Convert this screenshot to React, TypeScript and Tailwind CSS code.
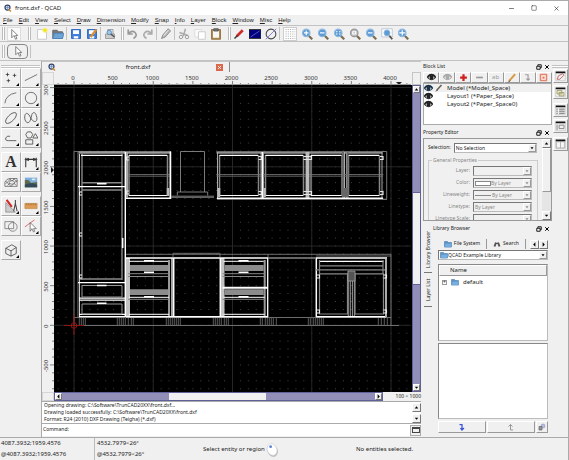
import type { ReactNode } from "react";
import { Minus, Square, X } from "lucide-react";

const menus = ["File", "Edit", "View", "Select", "Draw", "Dimension", "Modify", "Snap", "Info", "Layer", "Block", "Window", "Misc", "Help"];

function Icon({ children, className = "w-3 h-3" }: { children: ReactNode; className?: string }) {
  return (
    <svg viewBox="0 0 16 16" className={`${className} shrink-0`} fill="none" stroke="#555" strokeWidth="1.2">
      {children}
    </svg>
  );
}

const Handle = () => <div className="w-[3px] h-[13px] shrink-0 border-x border-[#bcbcbc] bg-white" />;
const Sep = () => <div className="mr-px w-px h-[13px] shrink-0 bg-[#c2c2c2]" />;

const Cursor = () => (
  <Icon>
    <path d="M5 2v11l3-3 2 5 2-1-2-4h3z" fill="#fff" stroke="#777" />
  </Icon>
);

const Logo = () => (
  <Icon className="w-2 h-2">
    <circle cx="7" cy="7" r="5" fill="#dce6f5" stroke="#33446b" strokeWidth="2.5" />
    <path d="M9 10l5 5" stroke="#c98e35" strokeWidth="3" />
    <path d="M4 7h6M7 4v6" stroke="#5b7db8" />
  </Icon>
);

const Folder = ({ className = "w-2 h-2" }: { className?: string }) => (
  <Icon className={className}>
    <path d="M1 3h6l1 2h7v9H1z" fill="#5b91c4" stroke="#447aae" />
    <path d="M3 7h13l-2 7H1z" fill="#79afe0" stroke="#5b91c4" strokeWidth=".6" />
  </Icon>
);

const Eye = ({ color = "#222" }: { color?: string }) => (
  <Icon className="w-[9px] h-[9px]">
    <path d="M1 8q7-8 14 0q-7 8-14 0z" fill="#fff" stroke={color} strokeWidth="2" />
    <circle cx="8" cy="8" r="3.4" fill={color} stroke="none" />
    <path d="M1 7q7-8 14 0" stroke={color} strokeWidth="3" />
  </Icon>
);

const Pencil = ({ color = "#d99a45", className = "w-[10px] h-[10px]" }: { color?: string; className?: string }) => (
  <Icon className={className}>
    <path d="M3 13L13 2" stroke={color} strokeWidth="3" />
    <path d="M2 15l3-3" stroke="#333" strokeWidth="1.5" />
  </Icon>
);

function Zoom({ mark, gray }: { mark: ReactNode; gray?: boolean }) {
  return (
    <Icon>
      <path d="M10 10l5 5" stroke="#796e51" strokeWidth="3" />
      <circle cx="7" cy="6.5" r="5" fill={gray ? "#bcbcbc" : "#5c9bd5"} stroke={gray ? "#999" : "#91b9dd"} strokeWidth="1.6" />
      <g stroke="#fff" strokeWidth="1.6">{mark}</g>
    </Icon>
  );
}

type Tool = { name: string; icon: ReactNode };

const fileTools: (Tool | null)[] = [
  { name: "New", icon: <Icon><path d="M2 2h9l3 3v10H2z" fill="#fff" stroke="#c5c5c5" /><circle cx="12" cy="3" r="3" fill="#f3e626" stroke="#f8f08a" /></Icon> },
  { name: "Open", icon: <Icon><path d="M1 3h6l1 2h6v9H1z" fill="#777" stroke="#666" /><path d="M3 7h13l-2 7H1z" fill="#6ba4d5" stroke="#4d87bd" /></Icon> },
  null,
  { name: "Save", icon: <Icon><path d="M2 2h12v12H2z" fill="#3e80dc" stroke="#2d67ba" /><path d="M4 3h8v5H4zM5 11h6v3H5z" fill="#fff" stroke="none" /></Icon> },
  { name: "Save As", icon: <Icon><path d="M2 2h12v12H2z" fill="#3e80dc" stroke="#2d67ba" /><path d="M4 3h8v5H4zM5 11h6v3H5z" fill="#fff" stroke="none" /><path d="M6 12l8-10" stroke="#dc8c32" strokeWidth="3" /></Icon> },
  null,
  { name: "Print Preview", icon: <Icon><path d="M2 8h12v6H2z" fill="#ccc" stroke="#999" /><path d="M5 2h7v6H5z" fill="#e8eef5" stroke="#999" /><circle cx="7" cy="6" r="3" fill="#9dc5e8" stroke="#5c8db8" /><path d="M9 8l5 4" strokeWidth="2" /></Icon> },
];

const editTools: (Tool | null)[] = [
  { name: "Undo", icon: <Icon><path d="M3 2v6h6M3 8q5-6 9-2t-2 8" stroke="#999" strokeWidth="2.3" /></Icon> },
  { name: "Redo", icon: <Icon><path d="M13 2v6H7M13 8Q8 2 4 6t2 8" stroke="#aaa" strokeWidth="2.3" /></Icon> },
  null,
  { name: "Erase", icon: <Icon><path d="M2 14l2-5 7-8 3 3-7 8z" fill="#bbb" stroke="#888" /><path d="M5 10l6-7" stroke="#eee" /></Icon> },
  null,
  { name: "Cut", icon: <Icon><path d="M10 1L7 11M2 6l11 4" stroke="#aaa" strokeWidth="2" /><circle cx="4" cy="12" r="2.3" stroke="#999" /><circle cx="12" cy="12" r="2.3" stroke="#999" /></Icon> },
  { name: "Copy", icon: <Icon><path d="M1 2h9v10H1z" fill="#fafafa" stroke="#ddd" /><path d="M6 5h9v10H6z" fill="#fff" stroke="#c8c8c8" /></Icon> },
  { name: "Paste", icon: <Icon><path d="M2 2h12v13H2z" fill="#b58a4c" stroke="#91703d" /><path d="M4 4h8v9H4z" fill="#f8f8f8" stroke="none" /><path d="M5 1h6v3H5z" fill="#777" /></Icon> },
];

const viewTools: Tool[] = [
  { name: "Draft Mode", icon: <Icon><path d="M5 11l8-8" stroke="#cf2929" strokeWidth="3.6" /><path d="M2 14l4-4" stroke="#333" strokeWidth="2" /></Icon> },
  { name: "Antialiasing", icon: <Icon><path d="M0 2h16v12H0z" fill="#00007d" stroke="#333" /><path d="M2 12L14 4" stroke="#5d5dc8" /></Icon> },
  { name: "Linetypes", icon: <Icon><circle cx="8" cy="8" r="6.5" stroke="#444" strokeWidth="1.4" /><path d="M1 15L15 1" stroke="#7474da" /></Icon> },
];

const zoomTools: Tool[] = [
  { name: "Zoom In", icon: <Zoom mark={<path d="M4 6.5h6M7 3.5v6" />} /> },
  { name: "Zoom Out", icon: <Zoom mark={<path d="M4 6.5h6" />} /> },
  { name: "Auto Zoom", icon: <Zoom mark={<path d="M4 5h2M8 5h2M4 8h2M8 8h2" />} /> },
  { name: "Zoom Selection", icon: <Zoom gray mark={<path d="M5 5h4v3H5z" />} /> },
  { name: "Previous View", icon: <Zoom mark={<path d="M4 6.5h6" />} /> },
  { name: "Window Zoom", icon: <Icon><path d="M1 1h14v11H1z" fill="#fff" stroke="#b9c5d0" /><path d="M11 10l4 5" strokeWidth="2.5" /><circle cx="8" cy="6.5" r="4" fill="#5c9bd5" stroke="#91b9dd" /></Icon> },
  { name: "Pan Zoom", icon: <Zoom mark={<path d="M3 6.5h8M7 3v7" />} /> },
];

function ToolRow({ tools }: { tools: (Tool | null)[] }) {
  return (
    <>
      {tools.map((t, i) =>
        t ? (
          <button key={i} aria-label={t.name} className="shrink-0 px-[2px]">{t.icon}</button>
        ) : (
          <Sep key={i} />
        )
      )}
    </>
  );
}

const drawTools: (Tool & { flyout?: boolean })[][] = [
  [
    { name: "Point", flyout: true, icon: <path d="M2 4h4M4 2v4M10 5h4M12 3v4M3 11h4M5 9v4" stroke="#222" strokeWidth=".8" /> },
    { name: "Line", flyout: true, icon: <path d="M1 11L15 4" stroke="#444" strokeWidth=".8" /> },
    { name: "Arc", flyout: true, icon: <path d="M1 14Q2 4 14 2" stroke="#444" strokeWidth=".8" /> },
    { name: "Circle", flyout: true, icon: <circle cx="8" cy="8" r="6.500" stroke="#444" strokeWidth=".8" /> },
    { name: "Ellipse", flyout: true, icon: <ellipse cx="8" cy="8" rx="8" ry="3.600" transform="rotate(-45 8 8)" stroke="#444" strokeWidth=".9" /> },
    { name: "Spline", flyout: true, icon: <path d="M3 13C-1 9 1 1 4 3c3 1 3 6 6 8 4 3 6-1 4-6-1-4-4-4-5-1-1 4-2 11-6 9z" stroke="#444" strokeWidth=".9" /> },
    { name: "Polyline", flyout: true, icon: <path d="M14 11H5Q1 11 2 8t5-2" stroke="#444" strokeWidth=".9" /> },
    { name: "Shape", flyout: true, icon: <g stroke="#444" strokeWidth=".9"><path d="M4 1h4l2 3-2 4H4L2 4zM10 8l3-5 3 5zM2 10h8v5H2z" /></g> },
  ],
  [
    { name: "Text", icon: <text x="8" y="14" textAnchor="middle" fontSize="18" fontFamily="Liberation Serif, serif" fontWeight="700" fill="#333" stroke="none">A</text> },
    { name: "Dimension", flyout: true, icon: <path d="M2 3v11M14 3v11M2 5h12M2 5l3-1v2zM14 5l-3-1v2z" stroke="#333" /> },
    { name: "Hatch", icon: <g stroke="#444" strokeWidth=".7"><path d="M1 8q2-4 6-4h8v9H1z" /><path d="M2 10l6-6M4 12l8-8M8 13l7-7M2 7l6 6M6 4l8 8M11 4l4 4" /><ellipse cx="9" cy="8.500" rx="3" ry="2" fill="#eee" /></g> },
    { name: "Image", icon: <g stroke="none"><path d="M1 3h14v11H1z" fill="#7eaedb" /><path d="M1 6q4-2 7 3l7-1v6H1z" fill="#5e6c49" /><path d="M1 11q7-3 14 0v3H1z" fill="#34495a" /><path d="M9 4h4v2H9z" fill="#dce8f3" /></g> },
  ],
  [
    { name: "Modify", flyout: true, icon: <g><path d="M2 4v11h11z" fill="#ccc" stroke="#777" strokeWidth=".7" /><path d="M3 1l6 8" stroke="#cf2929" strokeWidth="2.400" /><path d="M13 1v4l-2 9M13 5l2 9" stroke="#444" /></g> },
    { name: "Measure", flyout: true, icon: <g><path d="M1 5h14v6H1z" fill="#dc9c56" stroke="#b97c3d" strokeWidth=".6" /><path d="M3 5v2M5 5v2M7 5v2M9 5v2M11 5v2M13 5v2" stroke="#8d5926" strokeWidth=".6" /></g> },
    { name: "Selection", icon: <g stroke="#666" strokeWidth=".8"><path d="M1 3h10v8H1z" /><circle cx="10" cy="9" r="5" /></g> },
    { name: "Snap", flyout: true, icon: <g><path d="M1 9L12 1" stroke="#df4848" strokeWidth=".9" /><path d="M7 4v10l2-3 2 4 1-1-1-3h3z" fill="#fff" strokeWidth=".8" /></g> },
  ],
  [{ name: "Isometric", flyout: true, icon: <path d="M2 6l7-4 5 3v7l-6 3-6-3zM2 6l6 3 6-4M8 9v6" stroke="#444" strokeWidth=".9" /> }],
];

function ToolBox() {
  return (
    <aside className="w-[42px] shrink-0 border-r border-[#aaa] px-px pt-1">
      <div className="h-[3px] border-y border-[#c2c2c2] bg-white" />
      {drawTools.map((group, g) => (
        <div key={g} className="mb-1 grid grid-cols-2">
          {group.map((t) => (
            <button
              key={t.name}
              aria-label={t.name}
              className="relative flex h-5 w-5 items-center justify-center border border-t-white border-l-white border-r-[#aaa] border-b-[#aaa] bg-[#f0f0f0]"
            >
              <Icon className="w-[14px] h-[14px]">{t.icon}</Icon>
              {t.flyout && <span className="absolute right-px bottom-px h-[3px] w-[3px] bg-black [clip-path:polygon(100%_0,100%_100%,0_100%)]" />}
            </button>
          ))}
        </div>
      ))}
    </aside>
  );
}

// model space scale: 1000 units = 79.25px, origin at 20,240 of the canvas
const UNIT = 7.925;
const OX = 20;
const OY = 240.3;

function Ruler() {
  return (
    <svg className="block h-[13px] w-full" fontFamily="Noto Sans, sans-serif" fontSize="6" fill="#333">
      {Array.from({ length: 46 }, (_, i) => i - 2).map((n) => (
        <path key={n} d={`M${OX + n * UNIT} ${n % 5 === 0 ? 9 : 11}V13`} stroke="#555" strokeWidth=".7" />
      ))}
      {[0, 5, 10, 15, 20, 25, 30, 35, 40].map((n) => (
        <text key={n} x={OX + n * UNIT - 1} y="8" textAnchor="middle">{n * 100}</text>
      ))}
      <path d="M342 10h6l-3 3z" fill="#222" />
      <path d="M0 12.500H357" stroke="#999" />
    </svg>
  );
}

function VerticalRuler() {
  return (
    <svg className="block h-full w-3 shrink-0" fontFamily="Noto Sans, sans-serif" fontSize="6" fill="#333">
      {Array.from({ length: 40 }, (_, i) => i - 8).map((n) => (
        <path key={n} d={`M${n % 5 === 0 ? 8 : 10} ${OY - n * UNIT}H12`} stroke="#555" strokeWidth=".7" />
      ))}
      {[-5, 0, 5, 10, 15, 20, 25, 30].map((n) => (
        <text key={n} transform={`translate(6 ${OY - n * UNIT + 1}) rotate(-90)`} textAnchor="middle">{n * 100}</text>
      ))}
      <path d="M9 82v6l3-3z" fill="#222" />
    </svg>
  );
}

const gridRows = Array.from({ length: 39 }, (_, i) => OY - (i - 8) * UNIT);
const legs = [79, 81, 83, 85, 117, 119, 121, 123, 125, 128, 131, 133, 166, 168, 170, 172, 174, 176, 178, 180, 213, 215, 217, 219, 221, 224, 226, 228, 260, 262, 265, 267, 269, 271, 273, 276, 308, 310, 313, 315, 317, 319, 321, 323, 378, 381, 384, 387];

function DrawerUnit({ x, w, thick }: { x: number; w: number; thick?: boolean }) {
  const r = x + w;
  return (
    <g>
      <path d={`M${x} 258h4v59h-4z`} fill="#c4c4c4" />
      <path d={`M${r - 3} 260v57`} stroke="#999" strokeWidth="2" />
      <path d={`M${x + 4} 265H${r - 4}V271H${x + 4}zM${x + 4} 289.300H${r - 4}V295H${x + 4}z`} fill="#8c8c8c" />
      <path d={`M${x + 2} 273.700H${r - 3}M${x + 2} 276.500H${r - 3}M${x + 2} 299.300H${r - 3}`} stroke="#888" />
      <path d={`M${x + 3} 261.300H${r - 4}M${x + 3} 297.300H${r - 3}M${x + 3} 314.300H${r - 3}`} stroke="#fff" />
      {thick && <path d={`M${x + 2} 287.700H${r}`} stroke="#fff" strokeWidth="2" />}
      <path d={`M${x + 18} 260.700h10M${x + 18} 272.300h10M${x + 18} 296.700h10`} stroke="#fff" strokeWidth="1.500" />
      <path d={`M${r} 258v59`} stroke="#fff" strokeWidth="1.300" />
    </g>
  );
}

function WallUnit({ x, r, shelf = true }: { x: number; r: number; shelf?: boolean }) {
  return (
    <g>
      <path d={`M${x + 1} 152V198M${r - 1} 152V198`} stroke="#aaa" />
      <path d={`M${x + 3} 155V196M${r - 3.500} 155V196`} stroke="#888" strokeWidth="1.500" />
      {shelf && <path d={`M${x} 174.500H${r}M${x} 176.200H${r}`} stroke="#777" strokeWidth=".8" />}
      <path d={`M${x + 3} 155.400H${r - 4}M${x + 3} 195.500H${r - 4}`} stroke="#fff" strokeWidth="1.100" />
    </g>
  );
}

function Canvas() {
  return (
    <svg className="block h-full w-full bg-black" role="img" aria-label="front.dxf">
      {gridRows.map((y) => (
        <path key={y} d={`M${OX - 2 * UNIT - 0.5} ${y}H357`} stroke="#444" strokeWidth="1" strokeDasharray="1 6.925" />
      ))}
      {[0, 10, 20, 30, 40].map((n) => (
        <path key={n} d={`M${OX + n * UNIT} 0V307`} stroke="#262626" />
      ))}
      {[0, 10, 20, 30].map((n) => (
        <path key={n} d={`M0 ${OY - n * UNIT}H357`} stroke="#262626" />
      ))}
      <g transform="translate(-54 -85)" fill="none">
        {/* outlines, plinth and counter */}
        <path d="M74 151.500V325.500M74 151.500H125M74 317.500H391M74 325.500H399M391 254.300V325.500M125 254.300H391M173 257V253.300H220V257M268 254V258M316 256H391" stroke="#777" strokeWidth=".9" />
        {legs.map((x) => <path key={x} d={`M${x + 0.3} 318V325`} stroke="#666" strokeWidth=".9" />)}

        {/* tall unit */}
        <path d="M78.500 152.500H125M126 152.500H171" stroke="#999" strokeWidth="2.400" />
        <path d="M78 152V317" stroke="#777" />
        <path d="M79.500 154V317" stroke="#ccc" />
        <path d="M82 154V280M122 154V280M82 182.700H122M82 190H122M80 279H122" stroke="#888" strokeWidth="1.400" />
        <path d="M81 155.400H122.500M78 186.700H125M78 282.700H125M79 298.200H125M79 300.200H125M79 314.400H125M79 316.700H125" stroke="#fff" strokeWidth="1.200" />
        <path d="M82 285.500H122V297H82zM82 304H122V314H82z" stroke="#999" />
        <path d="M97 183.700h9.500M97 285.600h9.500M97 303.200h9.500M122.700 238v10" stroke="#fff" strokeWidth="1.500" />
        <path d="M125.300 151.500V317" stroke="#fff" strokeWidth="1.400" />
        <path d="M82 192h-2.500v3H82M82 233h-2.500v3H82M82 275h-2.500v3H82" stroke="#fff" />

        {/* wall units */}
        <WallUnit x={126} r={171} />
        <path d="M126 198.300H171M170.500 151.500V199" stroke="#fff" strokeWidth="1.500" />
        <path d="M127 152v46" stroke="#aaa" strokeWidth="2" />
        <path d="M168 188v8" stroke="#bbb" strokeWidth="2.500" />
        <path d="M180.500 192V151.500H204.500V192M177.300 195.500V192H207.700V195.500M171 196.200H214M171 197.300H214" stroke="#888" strokeWidth=".9" />
        <path d="M216.500 152.500H382.500" stroke="#8d8d8d" strokeWidth="2.400" />
        <path d="M382 151.500H386.700V199.300H382M217 199.400H387" stroke="#777" />
        <WallUnit x={216.500} r={262} />
        <WallUnit x={262.500} r={307} />
        <WallUnit x={308} r={345.500} shelf={false} />
        <WallUnit x={345.500} r={383} shelf={false} />
        <path d="M308 174.500H383M308 176.200H383" stroke="#777" strokeWidth=".8" />
        <path d="M343 152v46M347.500 152v46" stroke="#666" strokeWidth="2" />
        <path d="M342 188h6.500v9h-6.500z" fill="#666" />
        <path d="M219 188v9M264.500 188v9" stroke="#bbb" strokeWidth="2.500" />
        <path d="M307.500 152v47" stroke="#bbb" strokeWidth="3" />
        <path d="M217 198.200H383M262.300 152V199" stroke="#fff" strokeWidth="1.400" />
        <path d="M129 157h-2.500v3H129M129 191h-2.500v3H129M258.500 156.500h3v3h-3M258.500 191.500h3v3h-3M303.500 156.500h8v3h-8M303.500 191.500h8v3h-8M380 156.500h3v3h-3M380 191.500h3v3h-3" stroke="#e5e5e5" strokeWidth="1.200" />

        {/* base units */}
        <DrawerUnit x={126} w={46} />
        <DrawerUnit x={220.500} w={47.200} thick />
        <path d="M125 258H268M126 316.700H268M173.700 258V317M220.300 258V317M316 258H387M316 316.700H386M316.300 258V317" stroke="#fff" strokeWidth="1.500" />
        <path d="M268 258H316" stroke="#888" strokeWidth="1.500" />
        <path d="M319 261.300H383.500" stroke="#fff" strokeWidth="1.200" />
        <path d="M319 265.800H383.500M316 269.800H387M319 273.800H347.500V314H319.500V260M355 273.800H383.500V314H355zM383 260V274M348.300 271V316M354.500 271V316M350.300 281V316M352.500 281V316" stroke="#888" strokeWidth="1.200" />
        <path d="M386 259V317" stroke="#aaa" strokeWidth="2" />
        <path d="M348 271h7v10h-7z" fill="#555" stroke="#aaa" strokeWidth=".7" />
        <path d="M316.500 275h3v3h-3M316.500 310h3v3h-3M383.500 275h3v3h-3M383.500 310h3v3h-3" stroke="#eee" strokeWidth="1.100" />

        {/* origin */}
        <path d="M64 325.500h20M74 315v20" stroke="#8c1515" />
        <circle cx="74" cy="325.500" r="2.800" stroke="#8c1515" />
      </g>
    </svg>
  );
}

const arrows = { up: "M4 10l4-5 4 5z", down: "M4 6l4 5 4-5z", left: "M10 3L5 8l5 5z", right: "M6 3l5 5-5 5z" };

function Arrow({ dir, className = "w-[9px] h-[9px]" }: { dir: keyof typeof arrows; className?: string }) {
  return (
    <button aria-label={`Scroll ${dir}`} className={`${className} flex shrink-0 items-center justify-center border border-t-white border-l-white border-r-[#777] border-b-[#777] bg-[#f0f0f0]`}>
      <Icon className="w-[7px] h-[7px]"><path d={arrows[dir]} fill="#000" stroke="none" /></Icon>
    </button>
  );
}

function Drawing() {
  return (
    <main className="flex min-w-0 flex-1 flex-col">
      <div className="flex h-[11px] shrink-0 items-center border-t border-[#c5c5c5] pl-[6px]">
        <Logo />
        <span className="w-[160px] pl-1 text-center text-[6px]">front.dxf</span>
        <button aria-label="Close tab" className="flex h-[7px] w-[7px] items-center justify-center bg-[#dc684c] text-white">
          <X className="h-[5px] w-[5px]" strokeWidth={4} />
        </button>
        <span className="ml-[6px] h-full w-px bg-[#888]" />
      </div>
      <div className="flex h-[13px] shrink-0">
        <div className="w-3 shrink-0 border border-[#d5d5d5]" />
        <div className="min-w-0 flex-1"><Ruler /></div>
        <div className="w-[9px] border border-[#c5c5c5]" />
      </div>
      <div className="flex min-h-0 flex-1">
        <VerticalRuler />
        <div className="min-w-0 flex-1"><Canvas /></div>
        <div className="flex w-[9px] shrink-0 flex-col border border-[#61619a] bg-[#918fb8]">
          <Arrow dir="up" className="h-[7px] w-[7px]" />
          <div className="flex-[100]" />
          <div className="flex-[91] border-y border-[#61619a] bg-[#f0f0f0]" />
          <div className="flex-[100]" />
          <Arrow dir="down" className="h-[7px] w-[7px]" />
        </div>
      </div>
      <div className="flex h-[9px] shrink-0">
        <div className="w-3 shrink-0 border border-[#d5d5d5]" />
        <div className="flex flex-1 border border-[#61619a] bg-[#918fb8]">
          <Arrow dir="left" className="h-[7px] w-[7px]" />
          <div className="flex-[107]" />
          <div className="flex-[98] bg-[#f0f0f0]" />
          <div className="flex-[109]" />
          <Arrow dir="right" className="h-[7px] w-[7px]" />
        </div>
        <span className="w-[38px] shrink-0 text-right text-[5px] leading-[9px]">100 &lt; 1000</span>
      </div>
      <div className="flex h-[22px] shrink-0 border-t border-[#aaa] bg-white">
        <div className="flex flex-1 flex-col justify-end pl-[2px] text-[5px] leading-[7px]">
          <p className="whitespace-nowrap">Opening drawing: C:\Software\TrunCAD20XX\front.dxf...</p>
          <p className="whitespace-nowrap">Drawing loaded successfully: C:\Software\TrunCAD20XX\front.dxf</p>
          <p className="whitespace-nowrap">Format: R24 (2010) DXF Drawing (Teigha) (*.dxf)</p>
        </div>
        <div className="flex flex-col justify-between pt-px">
          <Arrow dir="up" />
          <Arrow dir="down" />
        </div>
      </div>
      <div className="mb-px flex h-[13px] shrink-0 items-center border-t border-[#aaa] bg-white text-[5px]">
        <label htmlFor="command" className="px-px">Command:</label>
        <input id="command" className="h-[10px] min-w-0 flex-1 outline-none" />
        <button aria-label="Command history" className="flex h-[11px] w-[11px] items-center justify-center border border-[#aaa] bg-[#f0f0f0]">
          <span className="h-[6px] w-2 border border-t-2 border-[#444]" />
        </button>
      </div>
    </main>
  );
}

function DockTitle({ children }: { children: ReactNode }) {
  return (
    <div className="flex h-[11px] shrink-0 items-center justify-between pr-[2px] text-[5px]">
      <h2>{children}</h2>
      <div className="flex items-center gap-[2px]">
        <button aria-label="Float">
          <Icon className="h-[6px] w-[6px]"><path d="M5 2h9v8h-3M5 2v4M2 6h9v8H2z" stroke="#111" strokeWidth="2.500" /></Icon>
        </button>
        <button aria-label="Close"><X className="h-[6px] w-[6px] text-black" strokeWidth={4} /></button>
      </div>
    </div>
  );
}

const blockTools: Tool[] = [
  { name: "Show all", icon: <Eye /> },
  { name: "Hide all", icon: <Eye color="#aaa" /> },
  { name: "Add block", icon: <Icon className="w-[9px] h-[9px]"><path d="M8 2v12M2 8h12" stroke="#cf2020" strokeWidth="4" /></Icon> },
  { name: "Remove block", icon: <Icon className="w-[9px] h-[9px]"><path d="M2 8h12" stroke="#999" strokeWidth="3" /></Icon> },
  { name: "Rename block", icon: <span className="text-[6px] text-[#999]">ab</span> },
  { name: "Edit block", icon: <Pencil /> },
  { name: "Insert block", icon: <Icon className="w-[9px] h-[9px]"><path d="M4 3h5v10M6 10l3 3 3-3" stroke="#999" strokeWidth="2" /></Icon> },
  { name: "Close block", icon: <Icon className="w-[9px] h-[9px]"><path d="M2 2h12v12H2z" fill="#e9785c" stroke="#dd8066" /><path d="M5 5h6v6H5z" stroke="#fff" strokeWidth="2" /></Icon> },
];

const raised = "border border-t-white border-l-white border-r-[#999] border-b-[#999] bg-[#f0f0f0]";

function BlockList() {
  return (
    <section className="pl-[2px]">
      <DockTitle>Block List</DockTitle>
      <div className="grid grid-cols-8">
        {blockTools.map((t) => (
          <button key={t.name} aria-label={t.name} className={`flex h-[11px] items-center justify-center ${raised}`}>{t.icon}</button>
        ))}
      </div>
      <ul className="h-[42px] border border-[#aaa] bg-white text-[6px] leading-2">
        {["Model (*Model_Space)", "Layout1 (*Paper_Space)", "Layout2 (*Paper_Space0)"].map((b, i) => (
          <li key={b} className={`flex h-2 items-center ${i === 0 ? "bg-[#f0f0f0]" : ""}`}>
            <Eye color={i === 0 ? "#1b3347" : "#222"} />
            <span className="ml-[2px] flex w-3">{i === 0 && <Pencil color="#665e50" className="w-2 h-2" />}</span>
            {b}
          </li>
        ))}
      </ul>
    </section>
  );
}

function Combo({ id, value, disabled, swatch, icon }: { id: string; value: string; disabled?: boolean; swatch?: ReactNode; icon?: ReactNode }) {
  return (
    <div className="flex h-[10px] min-w-0 flex-1 items-center border border-t-[#777] border-l-[#777] border-r-[#bbb] border-b-[#bbb] bg-white">
      <div className={`flex h-full min-w-0 flex-1 items-center pl-px ${disabled ? "bg-[#f0f0f0]" : ""}`}>
        {swatch}
        {icon}
        <select id={id} aria-label={id} disabled={disabled} className="h-full min-w-0 flex-1 appearance-none bg-transparent text-[5px] leading-2 opacity-100 outline-none">
          <option>{value}</option>
        </select>
      </div>
      <span className={`flex h-2 w-2 shrink-0 items-center justify-center ${raised}`}>
        <Icon className="h-[6px] w-[6px]"><path d={arrows.down} fill={disabled ? "#888" : "#000"} stroke="none" /></Icon>
      </span>
    </div>
  );
}

function PropertyEditor() {
  const rows = [
    { label: "Layer:", value: "" },
    { label: "Color:", value: "By Layer", swatch: <span className="h-[5px] w-4 shrink-0 border border-[#888] bg-white" /> },
    { label: "Lineweight:", value: "By Layer", swatch: <span className="mr-px h-px w-4 shrink-0 bg-[#888]" /> },
    { label: "Linetype:", value: "By Layer" },
    { label: "Linetype Scale:", value: "" },
  ];
  return (
    <section className="mt-[2px] pl-[2px]">
      <DockTitle>Property Editor</DockTitle>
      <div className="flex h-[83px] border border-[#999]">
        <div className="min-w-0 flex-1 overflow-hidden px-1 pt-1 text-[5px]">
          <div className="flex items-center gap-[3px] pr-px">
            <label htmlFor="Selection">Selection:</label>
            <Combo id="Selection" value="No Selection" />
          </div>
          <fieldset className="mt-1 border border-[#ccc] pr-[5px] text-[#888]">
            <legend className="mb-[3px] ml-[3px] px-px leading-[6px]">General Properties</legend>
            {rows.map((r) => (
              <div key={r.label} className="mb-[2px] flex items-center gap-[3px]">
                <label htmlFor={r.label} className="w-[41px] shrink-0 text-right whitespace-nowrap">{r.label}</label>
                <Combo id={r.label} value={r.value} swatch={r.swatch} disabled />
              </div>
            ))}
          </fieldset>
        </div>
        <div className="flex w-[9px] shrink-0 flex-col bg-[#e5e5e5]">
          <Arrow dir="up" />
          <div className={`h-11 ${raised}`} />
          <div className="flex-1" />
          <Arrow dir="down" />
        </div>
      </div>
    </section>
  );
}

function LibraryBrowser() {
  return (
    <section className="mt-[2px] flex min-h-0 flex-1">
      <nav className="flex w-3 shrink-0 flex-col items-center pt-1 pl-[2px] text-[5px] leading-2 whitespace-nowrap">
        <button className="h-[46px] rotate-180 border-t border-[#777] [writing-mode:vertical-rl]">Library Browser</button>
        <button className="h-[34px] rotate-180 border-t border-[#777] [writing-mode:vertical-rl]">Layer List</button>
      </nav>
      <div className="flex min-w-0 flex-1 flex-col">
        <DockTitle>Library Browser</DockTitle>
        <div className="mt-1 flex min-h-0 flex-1 flex-col pr-1 pl-[5px]">
          <div className="flex h-3 shrink-0 items-center text-[5px]">
            <button className="flex h-[10px] flex-1 items-center justify-center gap-[2px] border-r border-[#999]"><Folder />File System</button>
            <button className="flex h-[10px] w-[39px] items-center justify-center gap-[2px] border-r border-[#999]">
              <Icon className="w-2 h-2"><path d="M3 13L6 5M13 13l-3-8" strokeWidth="4" /><path d="M6 7h4" strokeWidth="2" /></Icon>
              Search
            </button>
            <div className="ml-1 flex"><Arrow dir="left" /><Arrow dir="right" /></div>
          </div>
          <div className="flex shrink-0"><Combo id="Library" value="QCAD Example Library" icon={<Folder />} /></div>
          <div className="mt-1 flex-1 border border-t-[#888] border-l-[#888] border-r-[#bbb] border-b-[#bbb] bg-white text-[6px]">
            <div className={`h-[11px] pl-[10px] leading-[9px] ${raised}`}>Name</div>
            <div className="flex h-3 items-center gap-1 pl-[3px]">
              <button aria-label="Expand" className="flex h-[5px] w-[5px] items-center justify-center border border-[#999] text-[5px] leading-[3px]">+</button>
              <Folder />
              default
            </div>
          </div>
          <div className="mt-[2px] flex-1 border border-t-[#888] border-l-[#888] border-r-[#bbb] border-b-[#bbb] bg-white" />
          <div className="mt-[2px] mb-1 flex h-3 shrink-0 gap-px">
            <button aria-label="Insert" className={`flex flex-1 items-center justify-center ${raised}`}>
              <Icon className="w-2 h-2"><path d="M3 3h5v10M5 10l3 4 4-4" stroke="#3853dc" strokeWidth="2.500" /></Icon>
            </button>
            <button aria-label="Up" className={`flex flex-1 items-center justify-center ${raised}`}>
              <Icon className="w-2 h-2"><path d="M12 14H7V3M3 7l4-4 4 4" stroke="#999" strokeWidth="2" /></Icon>
            </button>
            <button aria-label="Library settings" className={`flex w-3 items-center justify-center ${raised}`}>
              <Icon className="w-2 h-2"><circle cx="10" cy="6" r="4" fill="#b9bde0" stroke="#8b8fbd" /><path d="M2 7h6v7H2z" fill="#999" /></Icon>
            </button>
          </div>
        </div>
      </div>
    </section>
  );
}

const panels: Tool[] = [
  { name: "Property Editor", icon: <path d="M3 12l2-5 6-3 2 2-6 6z" stroke="#bd5656" /> },
  { name: "Layer List", icon: <path d="M3 5h7v5H3zM6 8h7v5H6z" fill="#e9e8bd" stroke="#99966b" /> },
  { name: "Block List", icon: <path d="M2 6h2M6 6h8M2 9h2M6 9h8M2 12h2M6 12h8" /> },
  { name: "Command Line", icon: <path d="M3 5v8M6 6h7v5H6z" stroke="#777" /> },
  { name: "Library Browser", icon: <path d="M2 4h12v9H2zM8 4v9" fill="#f5f5f5" stroke="#aaa" /> },
];

export default function App() {
  return (
    <div className="flex h-screen min-h-[400px] w-full flex-col overflow-hidden border-t border-r border-[#aaa] bg-[#f0f0f0] font-['Noto_Sans',sans-serif] text-[#222]">
      <header className="flex h-[14px] shrink-0 items-center bg-white pl-1 text-[6px]">
        <Logo />
        <h1 className="ml-[3px] flex-1">front.dxf - QCAD</h1>
        <div className="flex items-center gap-4 pr-2">
          <button aria-label="Minimize"><Minus className="h-[7px] w-[7px]" /></button>
          <button aria-label="Maximize"><Square className="h-[6px] w-[6px]" /></button>
          <button aria-label="Close"><X className="h-[7px] w-[7px]" /></button>
        </div>
      </header>

      <nav className="flex h-[10px] shrink-0 items-center gap-[6px] pl-[3px] font-['Liberation_Sans',sans-serif] text-[6px]">
        {menus.map((m) => (
          <button key={m}><u>{m[0]}</u>{m.slice(1)}</button>
        ))}
      </nav>

      <div className="flex h-[17px] shrink-0 items-center border-y border-[#c2c2c2] pl-[2px]">
        <Handle />
        <button aria-label="Select" className="mr-[7px] ml-[2px] border border-[#ddd] bg-[#fafafa]"><Cursor /></button>
        <Handle />
        <div className="ml-[3px] flex items-center">
          <ToolRow tools={fileTools} />
        </div>
        <div className="ml-[3px] flex items-center">
          <Handle />
          <ToolRow tools={editTools} />
        </div>
        <div className="ml-1 flex items-center">
          <Handle />
          <ToolRow tools={viewTools} />
        </div>
        <Sep />
        <button aria-label="Show grid" className="mx-[2px] border border-[#ccc] bg-white">
          <Icon><path d="M2 2h13M2 5h13M2 8h13M2 11h13M2 14h13" stroke="#aaa" strokeDasharray="1.500 1.500" /></Icon>
        </button>
        <ToolRow tools={zoomTools} />
      </div>

      <div className="flex h-[19px] shrink-0 items-center border-b border-[#c2c2c2] pl-[2px]">
        <Handle />
        <button aria-label="Reset tool" className="mr-[2px] ml-[2px] flex h-[15px] w-[21px] items-center justify-center rounded-sm border border-[#888]"><Cursor /></button>
        <Sep />
      </div>

      <div className="flex min-h-0 flex-1">
        <ToolBox />
        <Drawing />
        <div className="flex w-[131px] shrink-0 flex-col">
          <BlockList />
          <PropertyEditor />
          <LibraryBrowser />
        </div>
        <aside className="flex w-4 shrink-0 flex-col items-center pt-1">
          <div className="mb-px h-[3px] w-full border-y border-[#c2c2c2] bg-white" />
          {panels.map((p, i) => (
            <button key={p.name} aria-label={p.name} className={`flex h-[14px] w-[15px] items-center justify-center ${raised} ${i % 2 === 1 ? "mb-1" : "mb-[2px]"}`}>
              <Icon className="h-[11px] w-[11px]"><path d="M1 2h14v12H1z" stroke="#ccc" />{p.icon}<path d="M1 2h14" stroke="#111" strokeWidth="2.500" /></Icon>
            </button>
          ))}
        </aside>
      </div>

      <footer className="flex h-[23px] shrink-0 items-center border-t border-[#aaa] text-[6px]">
        <div className="w-[95px] border-r border-[#bbb] pl-px leading-[11px]"><p>4087.3932;1959.4576</p><p>@4087.3932;1959.4576</p></div>
        <div className="w-[108px] pl-[2px] leading-[11px]"><p>4532.7979&lt;26°</p><p>@4532.7979&lt;26°</p></div>
        <p className="w-[62px] whitespace-nowrap">Select entity or region</p>
        <svg viewBox="0 0 16 16" className="h-[15px] w-[15px]">
          <ellipse cx="8" cy="9" rx="5.500" ry="7" transform="rotate(-25 8 9)" fill="#bbb" />
          <ellipse cx="7.500" cy="8" rx="5" ry="6.500" transform="rotate(-25 7.500 8)" fill="#fff" stroke="#ccc" strokeWidth=".6" />
          <circle cx="6" cy="5" r="1.500" fill="#5c82d8" />
        </svg>
        <p className="ml-[76px] flex-1">No entities selected.</p>
      </footer>
    </div>
  );
}
